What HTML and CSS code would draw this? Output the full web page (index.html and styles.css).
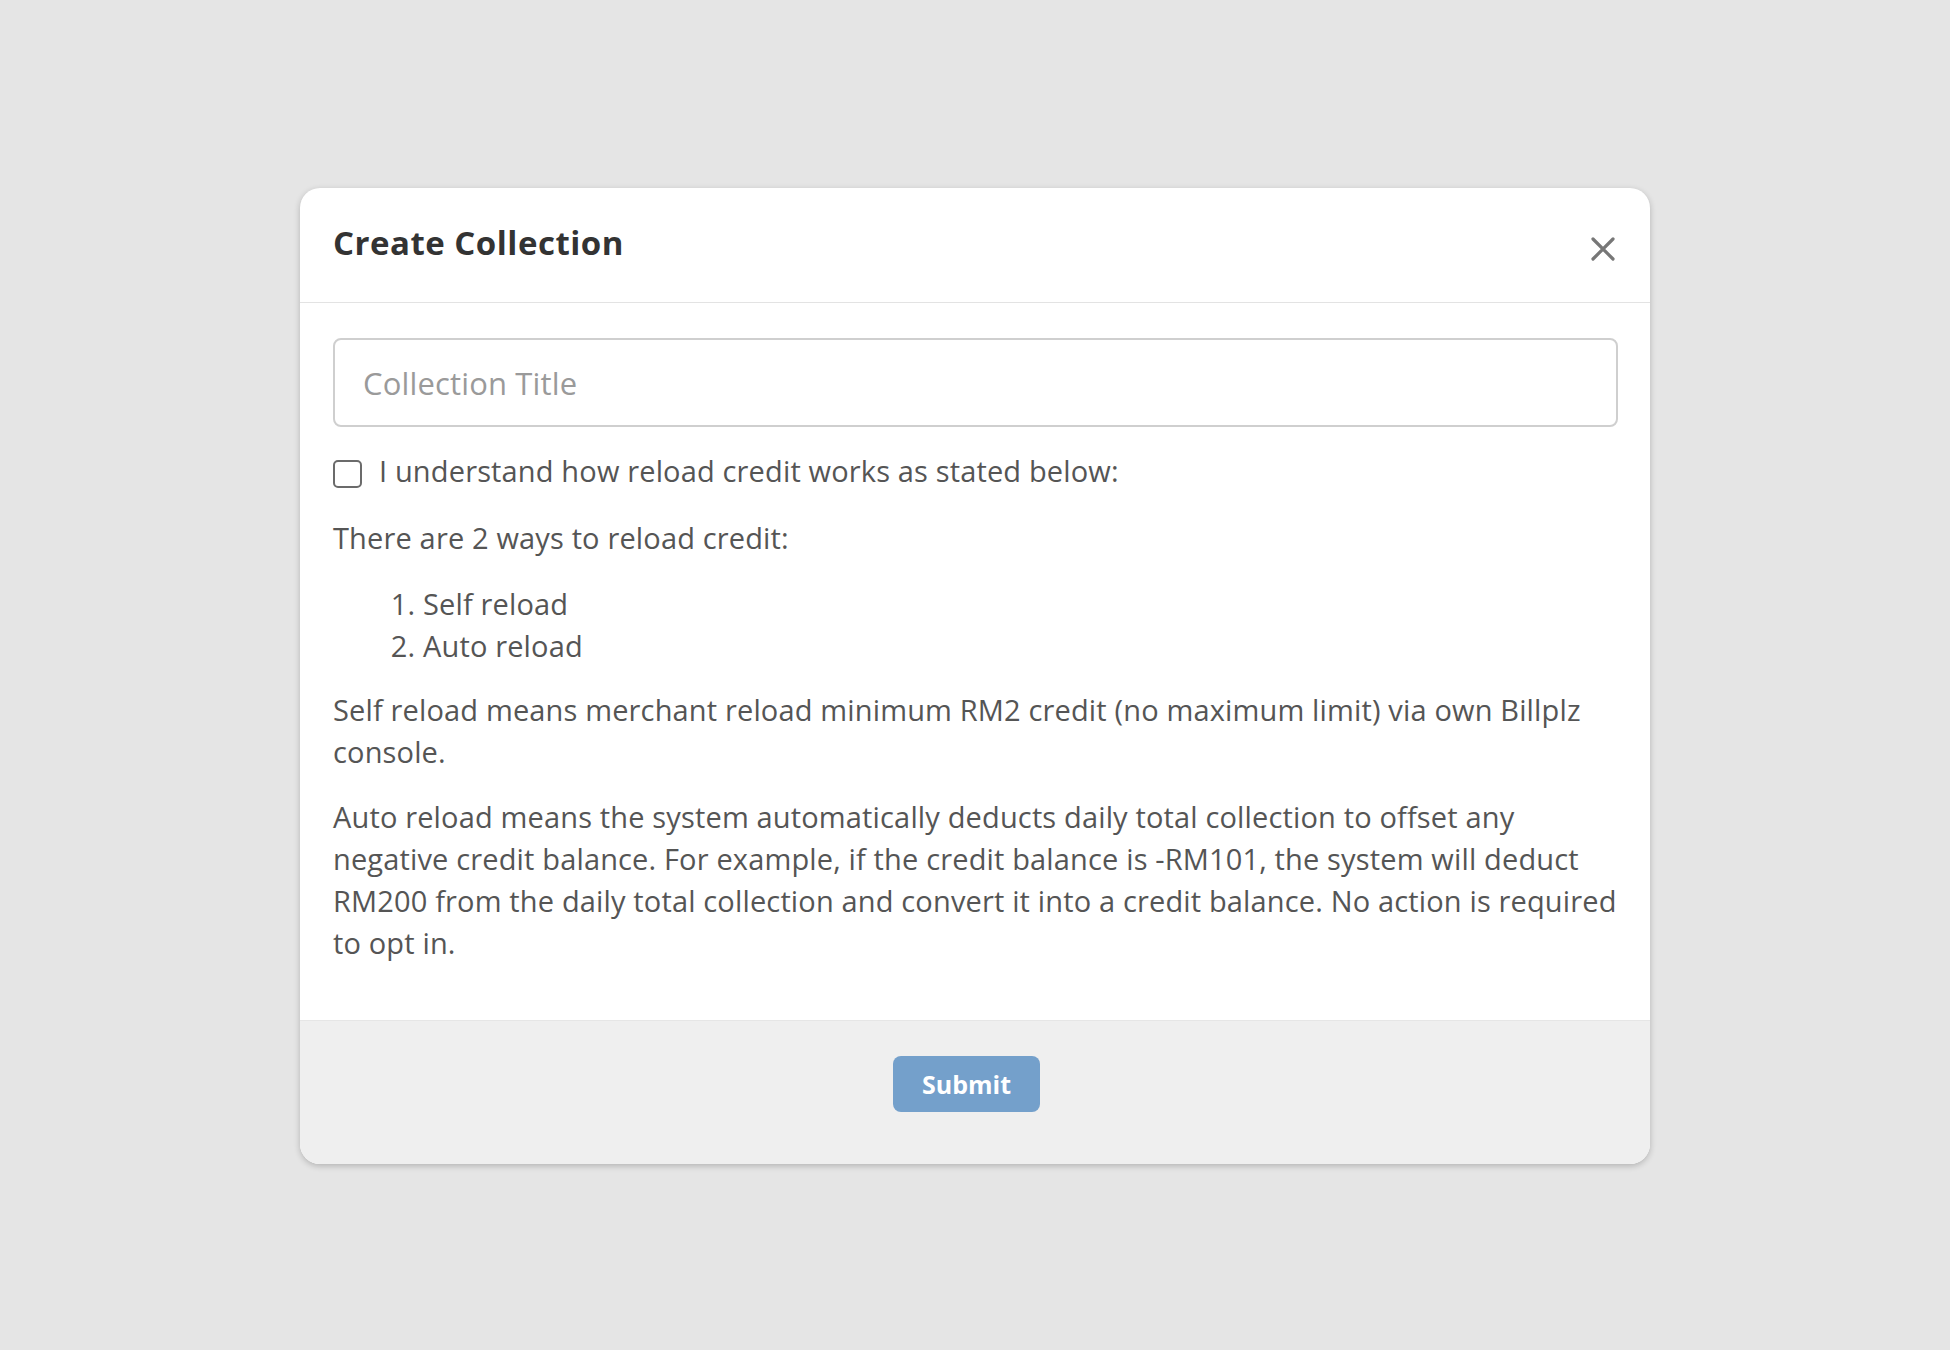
FILE: index.html
```html
<!DOCTYPE html>
<html lang="en">
<head>
<meta charset="utf-8">
<title>Create Collection</title>
<link rel="stylesheet" href="styles.css">
</head>
<body>
<div class="page">
  <div class="modal">
    <div class="modal-header">
      <h2 class="modal-title">Create Collection</h2>
      <button class="close-btn" type="button" aria-label="Close">
        <svg width="24" height="24" viewBox="0 0 24 24"><path d="M2 2 L22 22 M22 2 L2 22" stroke="#777" stroke-width="3.2" stroke-linecap="round" fill="none"/></svg>
      </button>
    </div>
    <div class="modal-body">
      <input class="title-input" type="text" placeholder="Collection Title">
      <label class="check-row">
        <span class="checkbox"></span>
        <span>I understand how reload credit works as stated below:</span>
      </label>
      <p class="intro">There are 2 ways to reload credit:</p>
      <ol class="ways">
        <li>Self reload</li>
        <li>Auto reload</li>
      </ol>
      <p>Self reload means merchant reload minimum RM2 credit (no maximum limit) via own Billplz console.</p>
      <p>Auto reload means the system automatically deducts daily total collection to offset any negative credit balance. For example, if the credit balance is -RM101, the system will deduct RM200 from the daily total collection and convert it into a credit balance. No action is required to opt in.</p>
    </div>
    <div class="modal-footer">
      <button class="submit-btn" type="button">Submit</button>
    </div>
  </div>
</div>
</body>
</html>
```

FILE: styles.css
```css
html, body {
  margin: 0;
  padding: 0;
  background: #e5e5e5;
}
body {
  font-family: "Open Sans", "Liberation Sans", sans-serif;
  color: #555;
}
.page {
  display: flex;
  justify-content: center;
  padding-top: 188px;
  min-height: 1350px;
  box-sizing: border-box;
}
.modal {
  width: 1350px;
  height: 976px;
  background: #fff;
  border-radius: 20px;
  box-shadow: 0 2px 6px rgba(0,0,0,0.22);
  overflow: hidden;
  display: flex;
  flex-direction: column;
}
.modal-header {
  display: flex;
  justify-content: space-between;
  align-items: flex-start;
  padding: 31px 35px 0 33px;
  height: 115px;
  box-sizing: border-box;
  border-bottom: 1px solid #e3e3e3;
}
.modal-title {
  margin: 0;
  font-size: 33px;
  letter-spacing: 0.5px;
  line-height: 48px;
  font-weight: 700;
  color: #333;
}
.close-btn {
  border: 0;
  background: none;
  padding: 0;
  margin-top: 18px;
  width: 24px;
  height: 24px;
  display: flex;
}
.modal-body {
  flex: 1;
  padding: 35px 32px 0 33px;
  font-size: 29px;
  letter-spacing: 0.15px;
  line-height: 42px;
}
.title-input {
  display: block;
  width: 100%;
  box-sizing: border-box;
  height: 89px;
  border: 2px solid #cfcfcf;
  border-radius: 8px;
  padding: 0 28px;
  font-family: "Open Sans", "Liberation Sans", sans-serif;
  font-size: 31px;
  letter-spacing: 0.15px;
  color: #555;
  outline: none;
  margin: 0 0 23px;
}
.title-input::placeholder {
  color: #9a9a9a;
}
.check-row {
  display: flex;
  align-items: center;
  gap: 17px;
  margin-bottom: 25px;
}
.checkbox {
  width: 29px;
  height: 28px;
  box-sizing: border-box;
  border: 2px solid #6b6b6b;
  border-radius: 5px;
  margin-top: 5px;
  flex: none;
}
.modal-body p {
  margin: 0 0 23px;
}
.modal-body p.intro {
  margin-bottom: 24px;
}
.ways {
  margin: 0 0 22px;
  padding-left: 90px;
}
.modal-footer {
  height: 144px;
  box-sizing: border-box;
  background: #efefef;
  border-top: 1px solid #e6e6e6;
  display: flex;
  justify-content: center;
  align-items: flex-start;
  padding-top: 35px;
}
.submit-btn {
  height: 56px;
  padding: 0 29px;
  margin-right: 17px;
  border: 0;
  border-radius: 8px;
  background: #74a0cb;
  color: #fff;
  font-family: "Open Sans", "Liberation Sans", sans-serif;
  font-weight: 700;
  font-size: 25px;
  letter-spacing: 0;
}
```
